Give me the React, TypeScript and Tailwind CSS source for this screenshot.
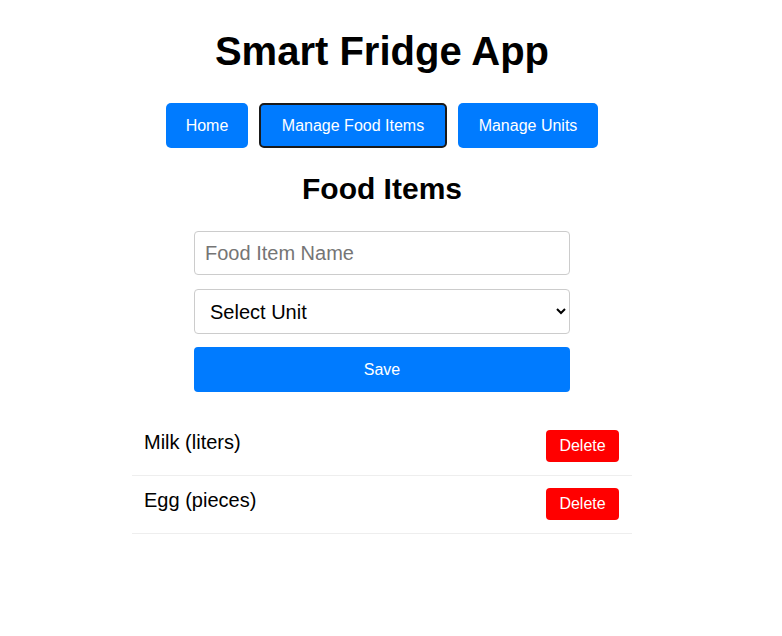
import { useState } from "react";

type FoodItem = {
  id: number;
  name: string;
  unit: string;
};

const NAV = [
  { label: "Home", width: "w-[82px]" },
  { label: "Manage Food Items", width: "w-[188px]" },
  { label: "Manage Units", width: "w-[140px]" },
];

const App = () => {
  const [active] = useState("Manage Food Items");
  const [name, setName] = useState("");
  const [unit, setUnit] = useState("");
  const [items, setItems] = useState<FoodItem[]>([
    { id: 1, name: "Milk", unit: "liters" },
    { id: 2, name: "Egg", unit: "pieces" },
  ]);

  const onSave = () => {
    if (!name || !unit) return;
    setItems((prev) => [...prev, { id: Date.now(), name, unit }]);
    setName("");
    setUnit("");
  };

  return (
    <div className="w-[764px] min-h-screen bg-white pt-[28px] text-black font-['Liberation_Sans',Arial,sans-serif]">
      <h1 className="text-center text-[40px] leading-[46px] font-bold">Smart Fridge App</h1>

      <nav className="mt-[29px] flex justify-center gap-[11px]">
        {NAV.map(({ label, width }) => (
          <button
            key={label}
            className={
              width +
              " h-[45px] rounded-[5px] bg-[#007bff] text-white text-[16px] leading-[18px] " +
              (label === active ? "border-2 border-[#1a1a1a]" : "border-0")
            }
          >
            {label}
          </button>
        ))}
      </nav>

      <h2 className="mt-[23px] text-center text-[30px] leading-[35px] font-bold">Food Items</h2>

      <div className="mx-auto mt-[25px] w-[376px] flex flex-col">
        <input
          className="h-[44px] px-[10px] border border-[#cccccc] rounded-[4px] text-[20px] placeholder:text-[#757575] outline-none"
          placeholder="Food Item Name"
          value={name}
          onChange={(e) => setName(e.target.value)}
        />
        <select
          className="mt-[14px] h-[45px] pl-[11px] pr-[8px] border border-[#cccccc] rounded-[4px] text-[20px] bg-white text-black"
          value={unit}
          onChange={(e) => setUnit(e.target.value)}
        >
          <option value="">Select Unit</option>
          <option value="liters">liters</option>
          <option value="pieces">pieces</option>
        </select>
        <button
          className="mt-[13px] h-[45px] rounded-[4px] bg-[#007bff] text-white text-[16px]"
          onClick={onSave}
        >
          Save
        </button>
      </div>

      <ul className="mx-auto mt-[26px] w-[500px]">
        {items.map((item) => (
          <li
            key={item.id}
            className="h-[58px] flex justify-between items-start pl-[12px] pr-[13px] pt-[12px] border-b border-[#eeeeee]"
          >
            <span className="text-[20px] leading-[23px] pt-[1px]">
              {item.name} ({item.unit})
            </span>
            <button
              className="w-[73px] h-[32px] rounded-[4px] bg-[#ff0000] text-white text-[16px]"
              onClick={() => setItems((prev) => prev.filter((i) => i.id !== item.id))}
            >
              Delete
            </button>
          </li>
        ))}
      </ul>
    </div>
  );
};

export default App;
